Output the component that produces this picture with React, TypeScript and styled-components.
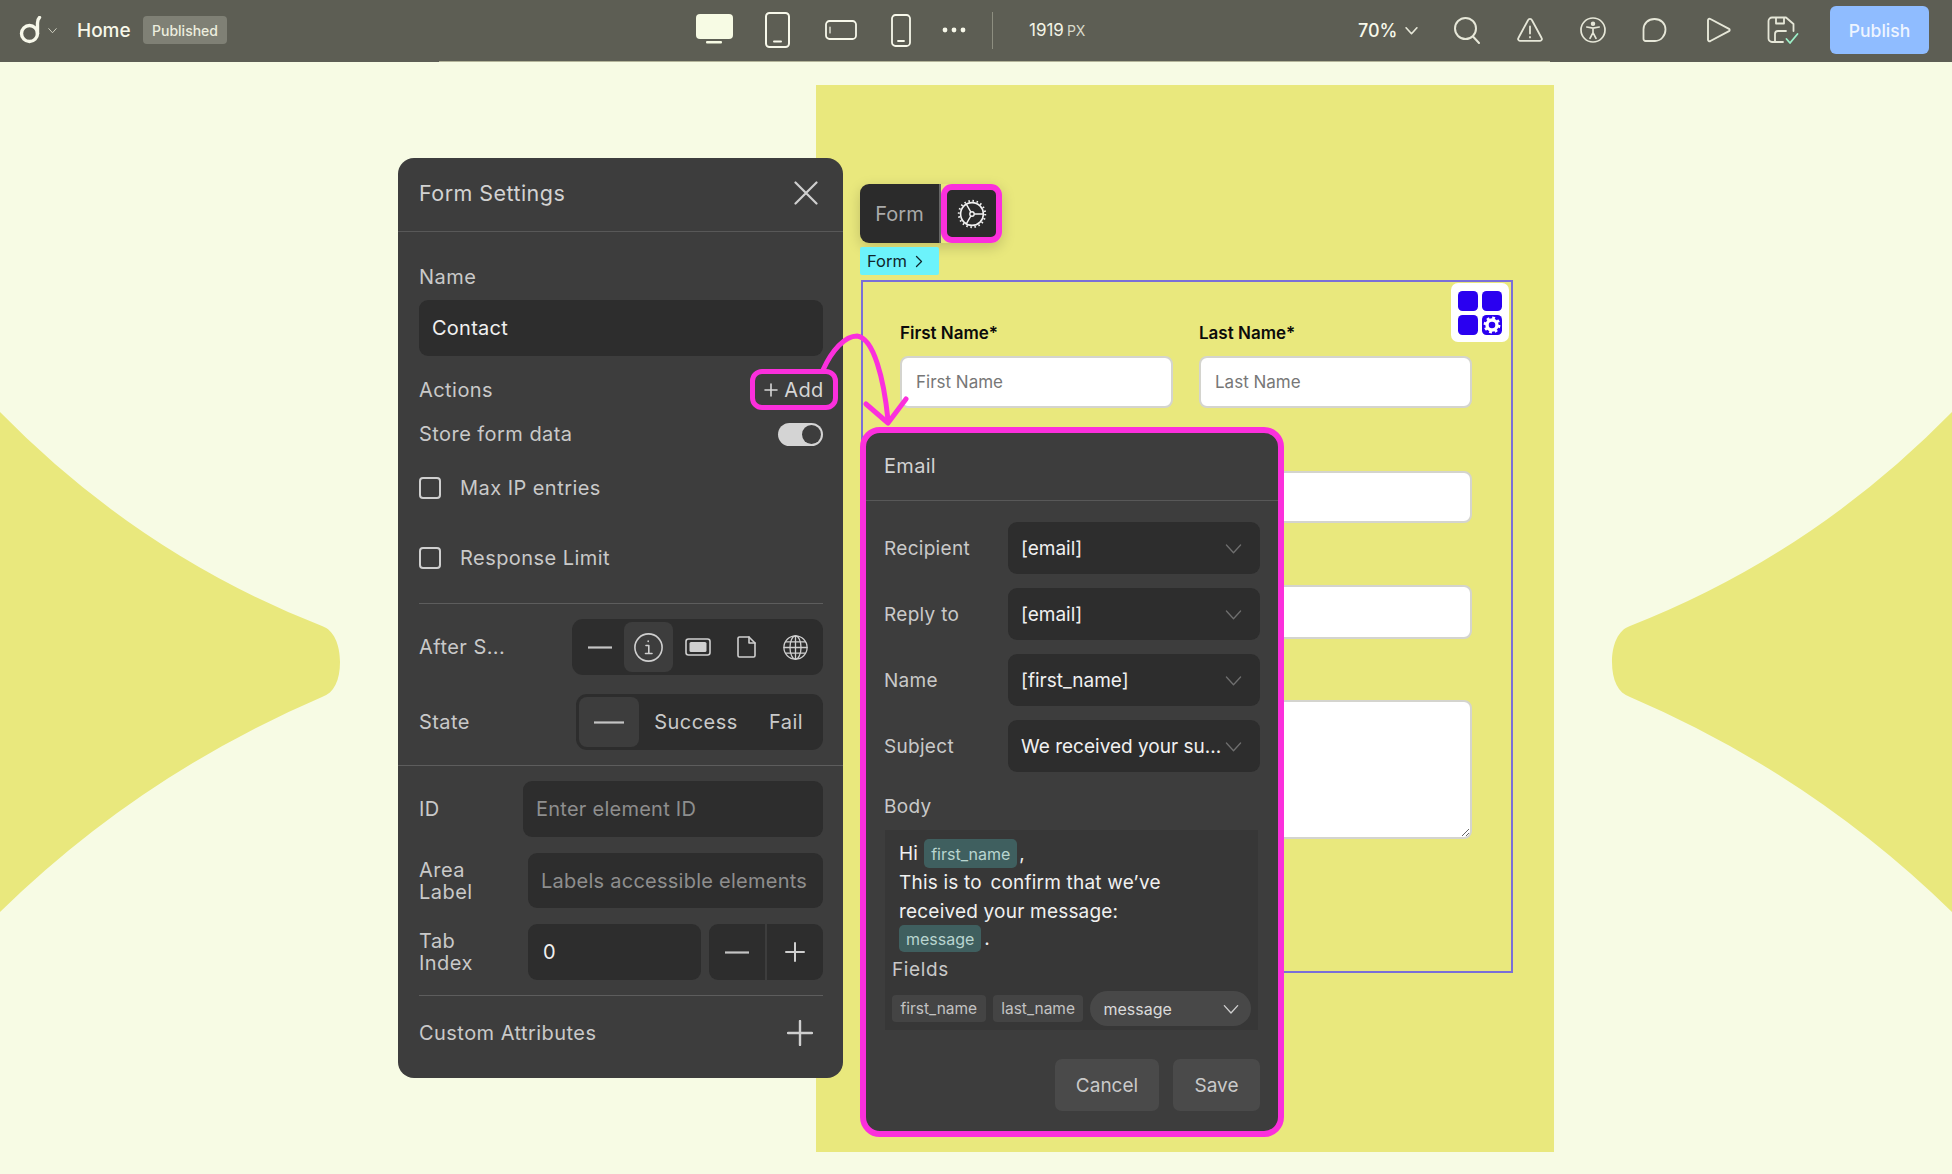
import React from "react";
import styled, { createGlobalStyle } from "styled-components";

const Global = createGlobalStyle`
  html, body { margin: 0; padding: 0; height: 100%; overflow: hidden; background: #f7fbe4; }
  body { font-family: Inter, "Liberation Sans", sans-serif; }
  * { box-sizing: border-box; }
`;

const MAGENTA = "#fb2fdc";

const Root = styled.div`
  position: relative;
  width: 1952px;
  height: 1174px;
  overflow: hidden;
  background: #f7fbe4;
`;

/* ---------- top bar ---------- */
const TopBar = styled.header`
  position: relative;
  height: 62px;
  padding-bottom: 2px;
  background: #5d5e54;
  display: flex;
  align-items: center;
  color: #f7f8ea;
  &::after {
    content: "";
    position: absolute;
    left: 439px;
    width: 1111px;
    bottom: 0;
    height: 1px;
    background: #b3b49a;
  }
`;
const LogoWrap = styled.div`
  display: flex;
  align-items: center;
  width: 77px;
  padding-left: 19px;
  gap: 6px;
`;
const Home = styled.span`
  font-size: 19px;
  font-weight: 500;
  width: 66px;
`;
const Badge = styled.span`
  width: 84px;
  height: 28px;
  border-radius: 4px;
  background: #7f8075;
  display: flex;
  align-items: center;
  justify-content: center;
  font-size: 14px;
  font-weight: 500;
  color: #ecedde;
`;
const Devices = styled.div`
  margin-left: 469px;
  display: flex;
  align-items: center;
`;
const DeviceSlot = styled.div<{ $w: number }>`
  width: ${(p) => p.$w}px;
  display: flex;
  justify-content: center;
  align-items: center;
`;
const VSep = styled.div`
  width: 1px;
  height: 37px;
  background: #8d8e80;
  margin-left: 26px;
`;
const Px = styled.div`
  margin-left: 36px;
  width: 329px;
  display: flex;
  align-items: baseline;
  gap: 3px;
  font-size: 17px;
  font-weight: 400;
  color: #f3f4e6;
  small {
    font-size: 14px;
    color: #d9dacb;
  }
`;
const Zoom = styled.div`
  display: flex;
  align-items: center;
  gap: 7px;
  width: 96px;
  font-size: 18px;
  font-weight: 500;
`;
const ToolIcons = styled.div`
  display: flex;
  align-items: center;
  width: 375px;
`;
const ToolSlot = styled.div<{ $w: number }>`
  width: ${(p) => p.$w}px;
  display: flex;
  justify-content: flex-start;
`;
const Publish = styled.button`
  width: 99px;
  height: 48px;
  border: 0;
  border-radius: 6px;
  background: #8fbcff;
  color: #eef5ff;
  font: 500 17.5px Inter, sans-serif;
  position: absolute;
  left: 1830px;
  top: 6px;
`;

/* ---------- canvas ---------- */
const Shapes = styled.svg`
  position: absolute;
  left: 0;
  top: 0;
  pointer-events: none;
`;
const Canvas = styled.main`
  position: relative;
  height: 1112px;
  padding: 23px 0 0 816px;
`;
const Sheet = styled.section`
  width: 738px;
  height: 1067px;
  background: #e9e87d;
  padding: 99px 0 0 44px;
`;
const FormBar = styled.div`
  display: flex;
  width: 142px;
  height: 59px;
  box-shadow: 0 4px 14px rgba(0, 0, 0, 0.18);
  border-radius: 10px;
`;
const FormTab = styled.div`
  width: 81px;
  height: 59px;
  background: #2b2b2b;
  border-radius: 9px 0 0 9px;
  border-right: 2px solid #666;
  color: #a9a9a9;
  font-size: 20px;
  display: flex;
  align-items: center;
  justify-content: center;
`;
const GearBtn = styled.div`
  width: 61px;
  height: 59px;
  background: #2b2b2b;
  border: 6px solid ${MAGENTA};
  border-radius: 11px;
  display: flex;
  align-items: center;
  justify-content: center;
`;
const FormTag = styled.div`
  width: 79px;
  height: 28px;
  margin-top: 4px;
  background: #6cf3fb;
  border-radius: 2px;
  color: #10262c;
  font-size: 16.5px;
  font-weight: 400;
  display: flex;
  align-items: center;
  gap: 8px;
  padding-left: 7px;
`;
const FormBox = styled.div`
  position: relative;
  margin: 5px 0 0 1px;
  width: 652px;
  height: 693px;
  border: 2px solid #7a6fd8;
  padding: 38px 0 0 37px;
`;
const BlockBadge = styled.div`
  position: absolute;
  right: 2px;
  top: 1px;
  width: 58px;
  height: 59px;
  background: #fff;
  border-radius: 7px;
  display: flex;
  align-items: center;
  justify-content: center;
`;
const Fields = styled.div`
  display: grid;
  grid-template-columns: 273px 273px;
  column-gap: 26px;
`;
const FieldCol = styled.div`
  display: flex;
  flex-direction: column;
`;
const FieldLabel = styled.div`
  font-size: 17px;
  font-weight: 600;
  color: #0b0b0b;
  height: 26px;
  line-height: 26px;
  margin-bottom: 10px;
`;
const WhiteInput = styled.div<{ $mt?: number; $h?: number; $full?: boolean }>`
  margin-top: ${(p) => p.$mt ?? 0}px;
  height: ${(p) => p.$h ?? 52}px;
  width: ${(p) => (p.$full ? "572px" : "100%")};
  background: #fff;
  border: 2px solid #d4d4ce;
  border-radius: 8px;
  padding-left: 14px;
  display: flex;
  align-items: center;
  font-size: 17px;
  color: #777;
`;
const WhiteArea = styled.textarea`
  display: block;
  margin-top: 61px;
  height: 139px;
  width: 572px;
  background: #fff;
  border: 2px solid #d4d4ce;
  border-radius: 8px;
  outline: 0;
  resize: both;
`;

/* ---------- shared dark controls ---------- */
const Panel = styled.aside`
  position: absolute;
  left: 398px;
  top: 158px;
  width: 445px;
  height: 920px;
  background: #3d3d3d;
  border-radius: 16px;
  color: #c9c9c9;
  font-size: 20px;
  letter-spacing: 0.45px;
`;
const PanelHead = styled.div`
  height: 74px;
  border-bottom: 1px solid #585858;
  padding: 0 25px 4px 21px;
  display: flex;
  align-items: center;
  justify-content: space-between;
  font-size: 21.5px;
  color: #d2d2d2;
`;
const Section = styled.div`
  padding: 0 20px 0 21px;
`;
const LabelLine = styled.div<{ $mt: number }>`
  margin-top: ${(p) => p.$mt}px;
  height: 26px;
  line-height: 26px;
`;
const DarkField = styled.div<{ $mt?: number; $h?: number; $w?: number; $c?: string; $pad?: number; $size?: number }>`
  margin-top: ${(p) => p.$mt ?? 0}px;
  height: ${(p) => p.$h ?? 56}px;
  width: ${(p) => (p.$w ? p.$w + "px" : "auto")};
  flex: ${(p) => (p.$w ? "none" : "1")};
  background: #2d2d2d;
  border-radius: 9px;
  display: flex;
  align-items: center;
  padding-left: ${(p) => p.$pad ?? 13}px;
  color: ${(p) => p.$c ?? "#f0f0f0"};
  font-size: ${(p) => p.$size ?? 20}px;
  letter-spacing: 0.25px;
  white-space: nowrap;
`;
const Row = styled.div<{ $mt: number; $h: number }>`
  margin-top: ${(p) => p.$mt}px;
  height: ${(p) => p.$h}px;
  display: flex;
  align-items: center;
  justify-content: space-between;
`;
const AddBox = styled.div`
  width: 88px;
  height: 41px;
  margin-right: -15px;
  border: 5px solid ${MAGENTA};
  border-radius: 12px;
  display: flex;
  align-items: center;
  justify-content: center;
  gap: 6px;
  color: #d6d6d6;
`;
const Toggle = styled.div`
  position: relative;
  width: 45px;
  height: 23px;
  border-radius: 12px;
  background: #d4d4d4;
  &::after {
    content: "";
    position: absolute;
    right: 2px;
    top: 2px;
    width: 19px;
    height: 19px;
    border-radius: 50%;
    background: #3d3d3d;
  }
`;
const CheckRow = styled.div<{ $mt: number }>`
  margin-top: ${(p) => p.$mt}px;
  height: 22px;
  display: flex;
  align-items: center;
  gap: 19px;
`;
const CheckBox = styled.span`
  width: 22px;
  height: 22px;
  border: 2px solid #cfcfcf;
  border-radius: 4px;
`;
const Rule = styled.div<{ $mt: number }>`
  margin-top: ${(p) => p.$mt}px;
  height: 1px;
  background: #5d5d5d;
`;
const Seg = styled.div<{ $w: number }>`
  width: ${(p) => p.$w}px;
  height: 100%;
  background: #2d2d2d;
  border-radius: 11px;
  padding: 3px;
  display: flex;
  align-items: center;
`;
const SegCell = styled.div<{ $on?: boolean; $w: number }>`
  width: ${(p) => p.$w}px;
  height: 100%;
  border-radius: 8px;
  display: flex;
  align-items: center;
  justify-content: center;
  background: ${(p) => (p.$on ? "#3d3d3d" : "transparent")};
`;
const Stack = styled.div`
  line-height: 22px;
`;
const Stepper = styled.div`
  margin-left: 8px;
  width: 114px;
  height: 56px;
  display: grid;
  grid-template-columns: 56px 56px;
  column-gap: 2px;
`;
const StepBtn = styled.div<{ $left?: boolean }>`
  background: #2d2d2d;
  border-radius: ${(p) => (p.$left ? "9px 0 0 9px" : "0 9px 9px 0")};
  display: flex;
  align-items: center;
  justify-content: center;
`;
const InlineFields = styled.div`
  display: flex;
  align-items: center;
`;
const PlusSlot = styled.div`
  display: flex;
  margin-right: 10px;
`;

/* ---------- email panel ---------- */
const EmailPanel = styled.aside`
  position: absolute;
  left: 860px;
  top: 427px;
  width: 424px;
  height: 710px;
  border: 6px solid ${MAGENTA};
  border-radius: 20px;
  background: #3d3d3d;
  color: #c9c9c9;
  font-size: 19px;
  letter-spacing: 0.3px;
`;
const EmailHead = styled.div`
  height: 68px;
  border-bottom: 1px solid #585858;
  padding: 0 0 1px 18px;
  display: flex;
  align-items: center;
  font-size: 20px;
  color: #d2d2d2;
`;
const EmailBody = styled.div`
  padding: 21px 18px 0;
`;
const EmailRow = styled.div<{ $mt?: number }>`
  margin-top: ${(p) => p.$mt ?? 14}px;
  display: flex;
  align-items: center;
`;
const EmailLabel = styled.div`
  width: 124px;
`;
const EmailSelect = styled.div`
  width: 252px;
  height: 52px;
  background: #2d2d2d;
  border-radius: 9px;
  padding: 0 18px 0 13px;
  display: flex;
  align-items: center;
  justify-content: space-between;
  color: #f0f0f0;
  letter-spacing: 0;
  white-space: nowrap;
  svg {
    flex: none;
  }
`;
const BodyLabel = styled.div`
  margin-top: 23px;
  height: 24px;
  line-height: 24px;
`;
const BodyBox = styled.div`
  margin: 11px 0 0 1px;
  width: 373px;
  height: 200px;
  background: #373737;
  padding: 9px 7px 0;
  color: #f0f0f0;
  font-size: 19px;
  letter-spacing: 0.2px;
`;
const BodyLine = styled.div<{ $h: number }>`
  height: ${(p) => p.$h}px;
  padding-left: 7px;
  display: flex;
  align-items: center;
  gap: 6px;
  white-space: pre;
`;
const WordGap = styled.span`
  margin-left: 3px;
`;
const VarChip = styled.span<{ $tight?: boolean }>`
  height: 100%;
  padding: 0 7px;
  margin-right: ${(p) => (p.$tight ? "-4px" : "-3px")};
  background: #3f5f5f;
  border-radius: 5px;
  color: #b9d5d0;
  font-size: 16px;
  letter-spacing: 0;
  display: inline-flex;
  align-items: center;
`;
const FieldsTitle = styled.div`
  margin-top: 6px;
  height: 24px;
  line-height: 24px;
  color: #c9c9c9;
  letter-spacing: 0.6px;
`;
const ChipRow = styled.div`
  margin-top: 9px;
  display: flex;
  align-items: center;
  gap: 7px;
`;
const TagChip = styled.span<{ $w: number }>`
  width: ${(p) => p.$w}px;
  height: 27px;
  background: #444;
  border-radius: 4px;
  color: #c2c2c2;
  font-size: 15.5px;
  letter-spacing: 0;
  display: inline-flex;
  align-items: center;
  justify-content: center;
`;
const PillSelect = styled.span`
  width: 161px;
  height: 35px;
  background: #484848;
  border-radius: 18px;
  color: #dadada;
  font-size: 16px;
  letter-spacing: 0;
  padding: 0 12px 0 13px;
  display: inline-flex;
  align-items: center;
  justify-content: space-between;
`;
const Actions = styled.div`
  margin-top: 29px;
  display: flex;
  justify-content: flex-end;
  gap: 14px;
`;
const Btn = styled.button<{ $w: number }>`
  width: ${(p) => p.$w}px;
  height: 52px;
  border: 0;
  border-radius: 7px;
  background: #4a4a4a;
  color: #c9c9c9;
  font: 400 19px Inter, sans-serif;
`;

/* ---------- icons ---------- */
const stroke = { fill: "none", stroke: "currentColor", strokeLinecap: "round", strokeLinejoin: "round" } as const;

const Logo = () => (
  <svg width="23" height="28" viewBox="0 0 23 28" {...stroke} strokeWidth="3.4" style={{ color: "#f7f8ea" }}>
    <circle cx="10.5" cy="17.5" r="8" />
    <path d="M18.5 18V7c0-2.2.5-4 2-5.5" />
  </svg>
);
const Chevron = ({ size = 12, color = "currentColor", w = 1.5 }: { size?: number; color?: string; w?: number }) => (
  <svg width={size} height={size} viewBox="0 0 12 12" fill="none" stroke={color} strokeWidth={w} strokeLinecap="round" strokeLinejoin="round">
    <path d="M1 3.5l5 5.5 5-5.5" />
  </svg>
);
const Desktop = () => (
  <svg width="37" height="33" viewBox="0 0 37 33">
    <rect x="0" y="0" width="37" height="25" rx="4" fill="#f7fbe4" />
    <rect x="10" y="27" width="16" height="2.4" rx="1" fill="#f7fbe4" />
  </svg>
);
const Tablet = () => (
  <svg width="25" height="36" viewBox="0 0 25 36" {...stroke} strokeWidth="2">
    <rect x="1" y="1" width="23" height="34" rx="3.5" />
    <path d="M9 29.5h7" />
  </svg>
);
const PhoneH = () => (
  <svg width="32" height="20" viewBox="0 0 32 20" {...stroke} strokeWidth="1.8">
    <rect x="1" y="1" width="30" height="18" rx="3.5" />
    <path d="M5 7v6" strokeWidth="1.2" />
  </svg>
);
const PhoneV = () => (
  <svg width="20" height="33" viewBox="0 0 20 33" {...stroke} strokeWidth="1.8">
    <rect x="1" y="1" width="18" height="31" rx="3.5" />
    <path d="M7 27h6" />
  </svg>
);
const Dots = () => (
  <svg width="24" height="6" viewBox="0 0 24 6" fill="currentColor">
    <circle cx="3" cy="3" r="2.4" />
    <circle cx="12" cy="3" r="2.4" />
    <circle cx="21" cy="3" r="2.4" />
  </svg>
);
const TI = { color: "#e6e7d8" };
const SearchI = () => (
  <svg width="26" height="27" viewBox="0 0 26 27" {...stroke} strokeWidth="2" style={TI}>
    <circle cx="11.5" cy="11.5" r="10.5" />
    <path d="M19 19.5l6 6.5" />
  </svg>
);
const WarnI = () => (
  <svg width="26" height="24" viewBox="0 0 26 24" {...stroke} strokeWidth="1.8" style={TI}>
    <path d="M11 2.2L1.4 20a1.8 1.8 0 0 0 1.6 2.8h20a1.8 1.8 0 0 0 1.6-2.8L15 2.2a2.2 2.2 0 0 0-4 0z" />
    <path d="M13 8.5v7M13 19v.4" />
  </svg>
);
const A11yI = () => (
  <svg width="26" height="26" viewBox="0 0 26 26" {...stroke} strokeWidth="1.7" style={TI}>
    <circle cx="13" cy="13" r="12" />
    <circle cx="13" cy="6.8" r="1.4" fill="currentColor" />
    <path d="M6.8 10l6.2 1.2 6.2-1.2M13 11.2v4.5M13 15.7l-3 5.6M13 15.7l3 5.6" />
  </svg>
);
const CommentI = () => (
  <svg width="25" height="24" viewBox="0 0 25 24" {...stroke} strokeWidth="1.8" style={TI}>
    <path d="M1.5 21V11.5C1.5 5.5 6 1 12.5 1S23.5 5.5 23.5 11.5 19 23 13 23H3.5a2 2 0 0 1-2-2z" />
  </svg>
);
const PlayI = () => (
  <svg width="25" height="26" viewBox="0 0 25 26" {...stroke} strokeWidth="1.9" style={TI}>
    <path d="M2 3.2v19.6a1.5 1.5 0 0 0 2.4 1.2L23 14.2a1.4 1.4 0 0 0 0-2.4L4.4 2A1.5 1.5 0 0 0 2 3.2z" />
  </svg>
);
const SaveI = () => (
  <svg width="33" height="29" viewBox="0 0 33 29" {...stroke} strokeWidth="1.8">
    <g style={TI}>
      <path d="M16 26H5a3.5 3.5 0 0 1-3.5-3.5V5A3.5 3.5 0 0 1 5 1.5h14l7.5 6.5v7" />
      <path d="M9 2v5.5h8V2M8 26v-8a3 3 0 0 1 3-3h8" />
    </g>
    <path d="M19.5 23l3.5 4 7.5-9" stroke="#9cf0c8" />
  </svg>
);
const Close = () => (
  <svg width="24" height="24" viewBox="0 0 24 24" {...stroke} strokeWidth="2.2" style={{ color: "#cfcfcf" }}>
    <path d="M1.5 1.5l21 21M22.5 1.5l-21 21" />
  </svg>
);
const Dash = ({ w = 24 }: { w?: number }) => (
  <svg width={w} height="3" viewBox={`0 0 ${w} 3`}>
    <rect width={w} height="2.2" y="0.4" fill="#c4c4c4" />
  </svg>
);
const Info = () => (
  <svg width="29" height="29" viewBox="0 0 29 29" {...stroke} strokeWidth="1.6" style={{ color: "#cfcfcf" }}>
    <circle cx="14.5" cy="14.5" r="13.6" />
    <path d="M12 12.5h2.8v8M11.5 20.5h6.5M14.2 8v.4" />
  </svg>
);
const ScreenI = () => (
  <svg width="26" height="18" viewBox="0 0 26 18">
    <rect x="1" y="1" width="24" height="16" rx="2.5" fill="none" stroke="#cfcfcf" strokeWidth="1.6" />
    <rect x="4.5" y="4" width="17" height="10" rx="1.5" fill="#cfcfcf" />
  </svg>
);
const FileI = () => (
  <svg width="19" height="22" viewBox="0 0 19 22" {...stroke} strokeWidth="1.6" style={{ color: "#cfcfcf" }}>
    <path d="M1 2.2A1.4 1.4 0 0 1 2.4 1H12l6 6v12.6a1.4 1.4 0 0 1-1.4 1.4H2.4A1.4 1.4 0 0 1 1 19.6z" />
    <path d="M12 1v6h6" />
  </svg>
);
const Globe = () => (
  <svg width="25" height="25" viewBox="0 0 25 25" {...stroke} strokeWidth="1.3" style={{ color: "#cfcfcf" }}>
    <circle cx="12.5" cy="12.5" r="11.6" />
    <ellipse cx="12.5" cy="12.5" rx="5.5" ry="11.6" />
    <path d="M12.5 1v23M1 12.5h23M2.6 6.8h19.8M2.6 18.2h19.8" />
  </svg>
);
const Plus = ({ size, w = 2, color = "#cfcfcf" }: { size: number; w?: number; color?: string }) => (
  <svg width={size} height={size} viewBox={`0 0 ${size} ${size}`} fill="none" stroke={color} strokeWidth={w} strokeLinecap="round">
    <path d={`M${size / 2} 1V${size - 1}M1 ${size / 2}H${size - 1}`} />
  </svg>
);
const Gear = () => (
  <svg width="32" height="32" viewBox="0 0 32 32" fill="none" stroke="#f2f2f2">
    <circle cx="16" cy="16" r="11.4" strokeWidth="1.6" />
    <circle cx="16" cy="16" r="13.2" strokeWidth="2" strokeDasharray="1.5 2.65" />
    <circle cx="16" cy="16" r="2.2" strokeWidth="1.4" />
    <path d="M18.2 16H27.4M14.9 14.1L10.3 6.1M14.9 17.9L10.3 25.9" strokeWidth="1.4" />
  </svg>
);
const BlocksI = () => (
  <svg width="44" height="44" viewBox="0 0 44 44">
    <rect x="0" y="0" width="20" height="20" rx="4.5" fill="#2a00f0" />
    <rect x="24" y="0" width="20" height="20" rx="4.5" fill="#2a00f0" />
    <rect x="0" y="24" width="20" height="20" rx="4.5" fill="#2a00f0" />
    <rect x="24" y="24" width="20" height="20" rx="4.5" fill="#2a00f0" />
    <circle cx="34" cy="34" r="5" fill="none" stroke="#fff" strokeWidth="3.4" />
    <circle cx="34" cy="34" r="7.2" fill="none" stroke="#fff" strokeWidth="2.4" strokeDasharray="2.8 2.85" />
  </svg>
);
const Arrow = styled.svg`
  position: absolute;
  left: 0;
  top: 0;
  pointer-events: none;
`;

export default function App() {
  return (
    <Root>
      <Global />
      <TopBar>
        <LogoWrap>
          <Logo />
          <Chevron size={9} color="#d9dacb" w={1.2} />
        </LogoWrap>
        <Home>Home</Home>
        <Badge>Published</Badge>
        <Devices>
          <DeviceSlot $w={37}><Desktop /></DeviceSlot>
          <DeviceSlot $w={88}><Tablet /></DeviceSlot>
          <DeviceSlot $w={39}><PhoneH /></DeviceSlot>
          <DeviceSlot $w={82}><PhoneV /></DeviceSlot>
          <DeviceSlot $w={24}><Dots /></DeviceSlot>
        </Devices>
        <VSep />
        <Px>1919<small>PX</small></Px>
        <Zoom>70%<Chevron size={13} color="#e6e7d8" /></Zoom>
        <ToolIcons>
          <ToolSlot $w={63}><SearchI /></ToolSlot>
          <ToolSlot $w={63}><WarnI /></ToolSlot>
          <ToolSlot $w={62}><A11yI /></ToolSlot>
          <ToolSlot $w={64}><CommentI /></ToolSlot>
          <ToolSlot $w={61}><PlayI /></ToolSlot>
          <ToolSlot $w={40}><SaveI /></ToolSlot>
        </ToolIcons>
        <Publish>Publish</Publish>
      </TopBar>

      <Shapes width="1952" height="1174" viewBox="0 0 1952 1174">
        <path
          d="M0 412Q140 555 322 626C334 630 340 645 340 662C340 680 334 693 322 697Q140 775 0 912Z"
          fill="#e9e87d"
        />
        <path
          d="M1952 412Q1812 555 1630 626C1618 630 1612 645 1612 662C1612 680 1618 693 1630 697Q1812 775 1952 912Z"
          fill="#e9e87d"
        />
      </Shapes>

      <Canvas>
        <Sheet>
          <FormBar>
            <FormTab>Form</FormTab>
            <GearBtn><Gear /></GearBtn>
          </FormBar>
          <FormTag>
            Form
            <svg width="8" height="13" viewBox="0 0 8 13" fill="none" stroke="#10262c" strokeWidth="1.3" strokeLinecap="round" strokeLinejoin="round">
              <path d="M1.5 1.5l5 5-5 5" />
            </svg>
          </FormTag>
          <FormBox>
            <BlockBadge><BlocksI /></BlockBadge>
            <Fields>
              <FieldCol>
                <FieldLabel>First Name*</FieldLabel>
                <WhiteInput>First Name</WhiteInput>
              </FieldCol>
              <FieldCol>
                <FieldLabel>Last Name*</FieldLabel>
                <WhiteInput>Last Name</WhiteInput>
              </FieldCol>
            </Fields>
            <WhiteInput $mt={63} $full />
            <WhiteInput $mt={62} $h={54} $full />
            <WhiteArea readOnly />
          </FormBox>
        </Sheet>
      </Canvas>

      <Panel>
        <PanelHead>
          Form Settings
          <Close />
        </PanelHead>
        <Section>
          <LabelLine $mt={32}>Name</LabelLine>
          <DarkField $mt={10}>Contact</DarkField>
          <Row $mt={13} $h={41}>
            Actions
            <AddBox><Plus size={14} w={1.6} color="#d6d6d6" />Add</AddBox>
          </Row>
          <Row $mt={11} $h={26}>
            Store form data
            <Toggle />
          </Row>
          <CheckRow $mt={30}><CheckBox />Max IP entries</CheckRow>
          <CheckRow $mt={48}><CheckBox />Response Limit</CheckRow>
          <Rule $mt={34} />
          <Row $mt={15} $h={56}>
            After S...
            <Seg $w={251}>
              <SegCell $w={49}><Dash /></SegCell>
              <SegCell $w={49} $on><Info /></SegCell>
              <SegCell $w={49}><ScreenI /></SegCell>
              <SegCell $w={49}><FileI /></SegCell>
              <SegCell $w={49}><Globe /></SegCell>
            </Seg>
          </Row>
          <Row $mt={19} $h={56}>
            State
            <Seg $w={247}>
              <SegCell $w={60} $on><Dash w={30} /></SegCell>
              <SegCell $w={114}>Success</SegCell>
              <SegCell $w={66}>Fail</SegCell>
            </Seg>
          </Row>
        </Section>
        <Rule $mt={15} />
        <Section>
          <Row $mt={15} $h={56}>
            ID
            <DarkField $w={300} $c="#8e8e8e">Enter element ID</DarkField>
          </Row>
          <Row $mt={16} $h={55}>
            <Stack>Area<br />Label</Stack>
            <DarkField $w={295} $h={55} $c="#8e8e8e" $pad={13}>Labels accessible elements</DarkField>
          </Row>
          <Row $mt={16} $h={56}>
            <Stack>Tab<br />Index</Stack>
            <InlineFields>
              <DarkField $w={173} $pad={15}>0</DarkField>
              <Stepper>
                <StepBtn $left><Dash /></StepBtn>
                <StepBtn><Plus size={20} /></StepBtn>
              </Stepper>
            </InlineFields>
          </Row>
          <Rule $mt={15} />
          <Row $mt={24} $h={26}>
            Custom Attributes
            <PlusSlot><Plus size={26} w={2.4} /></PlusSlot>
          </Row>
        </Section>
      </Panel>

      <EmailPanel>
        <EmailHead>Email</EmailHead>
        <EmailBody>
          <EmailRow $mt={0}>
            <EmailLabel>Recipient</EmailLabel>
            <EmailSelect>[email]<Chevron size={17} color="#6f6f6f" w={0.9} /></EmailSelect>
          </EmailRow>
          <EmailRow>
            <EmailLabel>Reply to</EmailLabel>
            <EmailSelect>[email]<Chevron size={17} color="#6f6f6f" w={0.9} /></EmailSelect>
          </EmailRow>
          <EmailRow>
            <EmailLabel>Name</EmailLabel>
            <EmailSelect>[first_name]<Chevron size={17} color="#6f6f6f" w={0.9} /></EmailSelect>
          </EmailRow>
          <EmailRow>
            <EmailLabel>Subject</EmailLabel>
            <EmailSelect>We received your su...<Chevron size={17} color="#6f6f6f" w={0.9} /></EmailSelect>
          </EmailRow>
          <BodyLabel>Body</BodyLabel>
          <BodyBox>
            <BodyLine $h={29}>Hi<VarChip $tight>first_name</VarChip>,</BodyLine>
            <BodyLine $h={29}><span>This is to<WordGap> confirm that we’ve</WordGap></span></BodyLine>
            <BodyLine $h={28}>received your message:</BodyLine>
            <BodyLine $h={27}><VarChip>message</VarChip>.</BodyLine>
            <FieldsTitle>Fields</FieldsTitle>
            <ChipRow>
              <TagChip $w={94}>first_name</TagChip>
              <TagChip $w={91}>last_name</TagChip>
              <PillSelect>message<Chevron size={16} color="#cfcfcf" w={1} /></PillSelect>
            </ChipRow>
          </BodyBox>
          <Actions>
            <Btn $w={104}>Cancel</Btn>
            <Btn $w={87}>Save</Btn>
          </Actions>
        </EmailBody>
      </EmailPanel>

      <Arrow width="1952" height="1174" viewBox="0 0 1952 1174" fill="none" stroke={MAGENTA} strokeWidth="5" strokeLinecap="round" strokeLinejoin="round">
        <path d="M823 370C832 350 845 336 857 336C874 338 884 380 888 420" />
        <path d="M866 404L888 423L906 399" />
      </Arrow>
    </Root>
  );
}
